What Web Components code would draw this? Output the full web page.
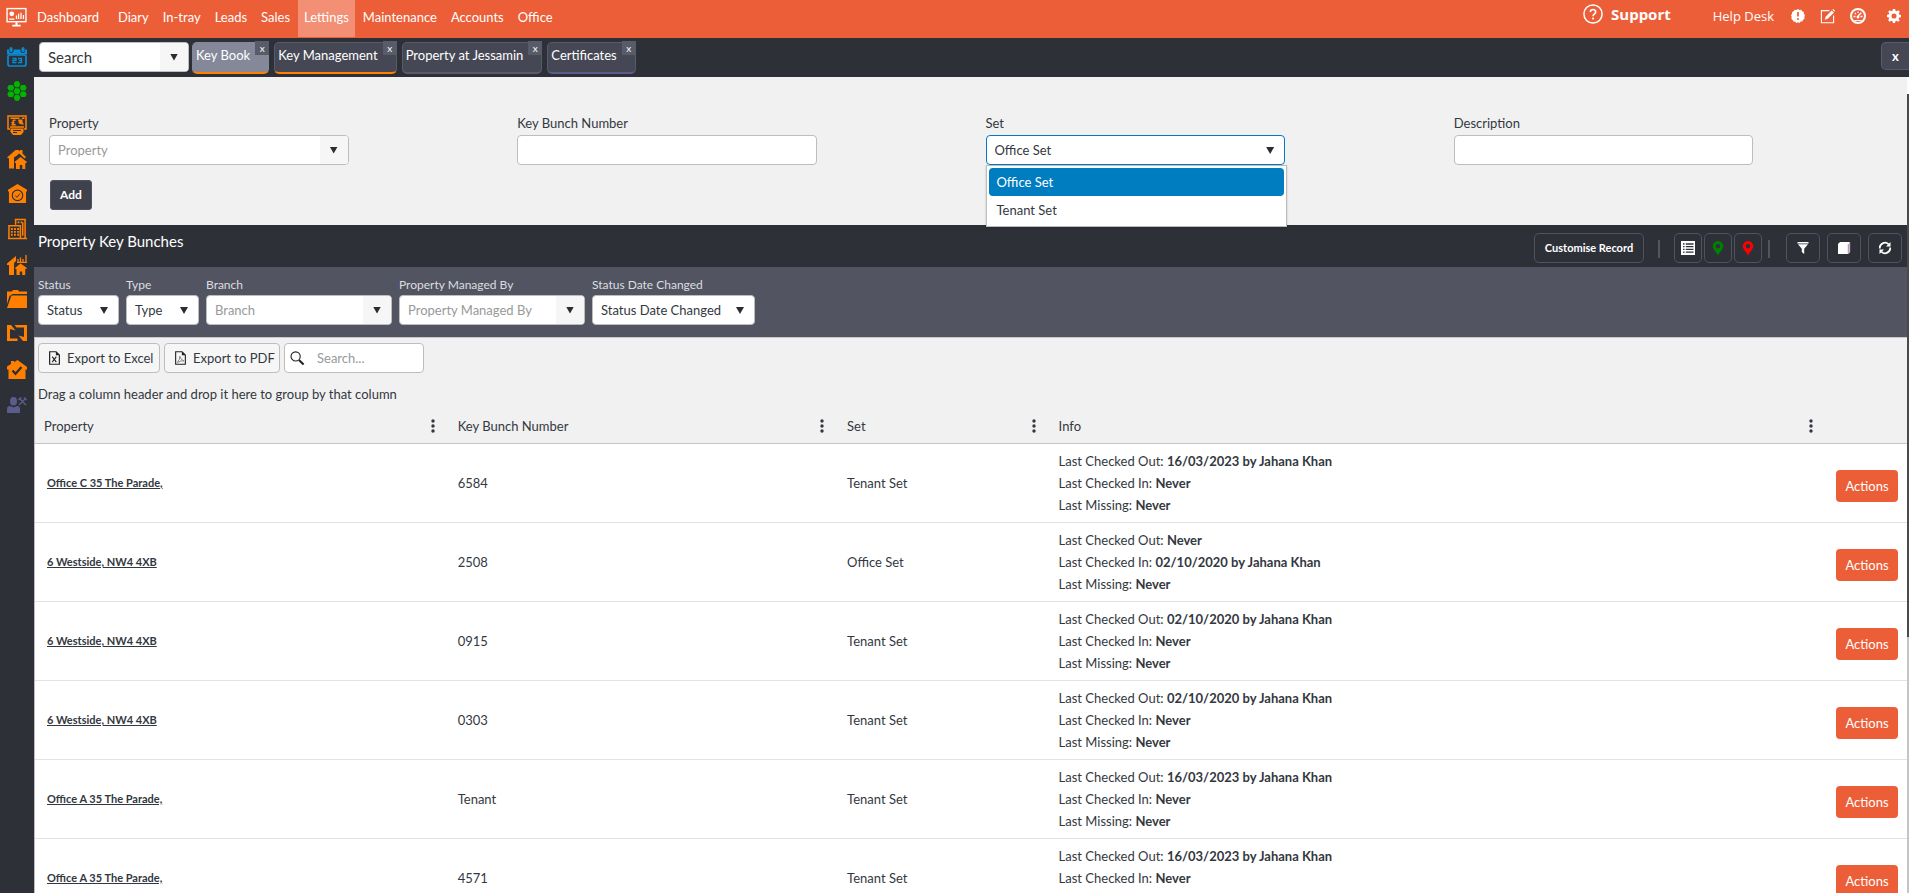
<!DOCTYPE html>
<html lang="en">
<head>
<meta charset="utf-8">
<title>Key Book</title>
<style>
html, body { margin: 0; height: 100%; }
body { font: 13px/16px Lato, "Open Sans", sans-serif; color: #333840; background: #2e3038; }
</style>
</head>
<body>
<key-app></key-app>
<script>
const define = (name, html, setup) => {
  const template = document.createElement('template');
  template.innerHTML = '<style>*{box-sizing:border-box}button,input,select{font:inherit;color:inherit;margin:0}</style>' + html;
  customElements.define(name, class extends HTMLElement {
    connectedCallback() {
      if (this.shadowRoot) return;
      this.attachShadow({ mode: 'open' }).append(template.content.cloneNode(true));
      if (setup) setup(this, this.shadowRoot);
    }
  });
};

const ICONS = {
  monitor: ['0 0 20 20', '<rect x="1" y="1.5" width="18" height="12.5" fill="none" stroke="currentColor" stroke-width="1.3"/><path d="M9 14h2v3h3v1.6H6V17h3z" fill="currentColor"/><circle cx="5.5" cy="6.5" r="2.3" fill="currentColor"/><path d="M3 11.5h5M10 11.5V8m2 3.500V6.500m2.300 5V5.500m2.300 6V7.500" stroke="currentColor" stroke-width="1.200"/>'],
  calendar: ['0 0 20 20', '<g fill="currentColor"><rect x="2.500" y="0" width="3" height="5" rx="1.500"/><rect x="14.500" y="0" width="3" height="5" rx="1.500"/><path d="M0 2.500h2v2l1 1.500h2l1.500-1.500v-2h7v2L15 6h2l1-1.500v-2h2V7.500H0z"/></g><rect x="1" y="8" width="18" height="11" rx="2" fill="none" stroke="currentColor" stroke-width="1.700"/><path d="M5.500 11.500h3.500v2H6v2.200h3.500M11 11.500h3.500v4.200H11M12 13.600h2.500" fill="none" stroke="currentColor" stroke-width="1.300"/>'],
  hexes: ['0 0 20 20', '<path fill="currentColor" d="M8 .5 10 0l2 .5L13.300 3.300 12 6l-2 .6L8 6 6.700 3.300zM8 7.200h4l1.400 2.800-1.400 2.900H8L6.600 10zM8 13.900l2-.5 2 .5 1.300 2.700L12 19.400l-2 .6-2-.6-1.300-2.800zM1.800 4h4L7.200 6.800 5.800 9.600h-4L.3 6.800zM1.800 10.500h4l1.400 2.800-1.400 2.800h-4L.3 13.300zM14.200 4h4l1.500 2.800-1.500 2.800h-4l-1.400-2.800zM14.200 10.500h4l1.500 2.800-1.500 2.800h-4l-1.400-2.800z"/>'],
  invoice: ['0 0 20 20', '<g fill="none" stroke="currentColor" stroke-width="1.500"><path d="M3 14H1V1h18v13h-2M3.500 3.200h9M15 3.200h2.500M3 12h14"/><path d="M8.500 5.200H7q-1 0-1 1.500v3M4.500 7.700h3M4.500 9.700h4.200"/></g><g fill="currentColor"><path d="M11 4.500h4.500V7L17 9.500h-2.300L12 8.500z"/><path d="M3.500 13.500h13V17L14 20H6l-2.500-3z"/></g><path d="M6 15.500h8M6 17.500h4" stroke="#2e3038" stroke-width="1.100"/>'],
  houses: ['0 0 20 20', '<path fill="currentColor" d="M0 8.500 8.500 1h3L13 2.300V1h2.500v3.500L19 8l-1.500 1.500L14 6l-2-1.500L10 6.500 7 8.500V19.500H2V9.500z"/><path fill="currentColor" d="M7.500 13 13.500 8 20 13l-1 1.200-.7-.5V20h-3v-4h-2.500v4H9v-6.300l-.7.500z"/>'],
  homecheck: ['0 0 20 20', '<path fill="currentColor" d="M0 6 10 0l10 6v2h-1v12H1V8H0z"/><circle cx="10" cy="12" r="5.500" fill="none" stroke="#2e3038" stroke-width="1.200"/><path d="m7.500 12 2 2 3.200-4" fill="none" stroke="#2e3038" stroke-width="1"/>'],
  buildings: ['0 0 20 22', '<g fill="none" stroke="currentColor" stroke-width="1.600"><path d="M8 6.500V1h10v20M1 21V7.500h12V21M0 21h20M15.500 4v14"/></g><path stroke="currentColor" stroke-width="2" stroke-dasharray="2 1.300" d="M3 11h9M3 14h9M3 17h9M10 4h5"/>'],
  housechart: ['0 0 20 20', '<path fill="currentColor" d="M0 8.500 9 1v5L7 8v12H2V10H0zM8 13l5.500-4.500L20 13l-1 1.300-.8-.5V20h-3v-3.500h-2.400V20H9.500v-6.200l-.7.500z"/><path d="M11 7V4m2.500 3V2.500M16 7V4m3 3V0M10 7.300h10" stroke="currentColor" stroke-width="1.300"/>'],
  folder: ['0 0 20 18', '<path fill="currentColor" d="M0 1.500h5L6 0h5l1 1.500h8V4H5.500L2.500 6 0 14zM4.500 5.500H20V18H0z"/>'],
  swap: ['0 0 20 16', '<path fill="currentColor" d="M0 0h4l4.500 5.500L3 4v9.500h7.500V16H0zM7.500 0H20v16h-4l-4.500-5.500L17 12V2.500H9.500z"/>'],
  housetick: ['0 0 20 19', '<path fill="currentColor" d="M0 6.500 4 4V1h3v1.200L10.500 0 20 7v2.500h-1.500V19h-17V9.500H0z"/><path d="m5.500 10.500 3 3.200 6-6.700" fill="none" stroke="#2e3038" stroke-width="2.300"/>'],
  worker: ['0 0 20 16', '<g fill="currentColor"><ellipse cx="6.500" cy="4.300" rx="3.500" ry="4.300"/><path d="M0 16v-4q0-3 3-3l3.500 1.500L10 9q3 0 3 3v4z"/></g><path d="m12 1 7 7M19 1l-7 7M11.500 3l3-2.500M17 .5 19.500 3" stroke="currentColor" stroke-width="1.300"/>'],
  help: ['0 0 20 20', '<circle cx="10" cy="10" r="9.100" fill="none" stroke="currentColor" stroke-width="1.500"/><path d="M7.300 8q.2-2.500 2.700-2.500T12.700 8q0 1.300-1.500 2.200-1.200.7-1.200 2" fill="none" stroke="currentColor" stroke-width="1.600"/><circle cx="10" cy="14.500" r="1.100" fill="currentColor"/>'],
  badge: ['0 0 16 16', '<path fill="currentColor" d="m8 0 1.700 1.100 2-.3 1 1.800 1.900.8.100 2L16 7.200 15.200 9l.3 2-1.700 1.200-.7 1.900-2 .1L9.700 16 8 15.200l-1.800.8-1.500-1.500-2-.1-.7-1.900L.4 11l.4-2L0 7.200l1.200-1.700.1-2 1.900-.8 1-1.900 2 .3z"/><path d="M8 3.500v5.200" stroke="#ec5e37" stroke-width="2"/><circle cx="8" cy="11.500" r="1.200" fill="#ec5e37"/>'],
  edit: ['0 0 16 16', '<path d="M10 1.700H1.500v13h13V7" fill="none" stroke="currentColor" stroke-width="1.200"/><path fill="currentColor" d="M5 11.500 6 8.200 12.500 1.600l2.300 2.300-6.600 6.500zM13.300.9 14.200 0 16 1.800l-.9 1z"/>'],
  gauge: ['0 0 16 16', '<circle cx="8" cy="8" r="7" fill="none" stroke="currentColor" stroke-width="2"/><path d="M3.500 8.500h2M10.500 8.500h2M4.800 5l1.200 1M8 3.500V5M8 8l3.300-3.300" stroke="currentColor" stroke-width="1.300"/><circle cx="8" cy="9" r="1.500" fill="currentColor"/><path d="M4.500 12.500h7" stroke="currentColor"/>'],
  gear: ['0 0 16 16', '<path fill="currentColor" fill-rule="evenodd" d="M6.700 0h2.600l.5 2.200 1.200.5 2-1.200L14.600 3.200l-1.200 2 .4 1.200 2.200.4v2.500l-2.200.5-.5 1.200 1.200 2-1.700 1.700-2-1.200-1.200.5-.4 2H6.700L6.200 13.800 5 13.300l-2 1.200L1.300 12.800l1.200-2L2 9.700 0 9.200V6.700l2.100-.5.500-1.200-1.200-2L3.200 1.400l1.900 1.200 1.200-.5zM8 5.100a2.900 2.900 0 1 0 0 5.800 2.900 2.900 0 0 0 0-5.800z"/>'],
  list: ['0 0 14 14', '<path fill="#fff" d="M0 0h14v14H0z"/><path d="M2 3h1.500M2 5.700h1.500M2 8.400h1.500M2 11.100h1.500M4.800 3H12.500M4.800 5.700h7.700M4.800 8.400h7.700M4.800 11.100h7.700" stroke="#2e3038" stroke-width="1.300"/>'],
  pin: ['0 0 12 16', '<path fill="currentColor" fill-rule="evenodd" d="M6 1a5.200 5.200 0 0 1 5.200 5.200C11.200 9.500 7.500 12 6 15.500 4.500 12 .8 9.500.8 6.200A5.200 5.200 0 0 1 6 1zm0 3a2.200 2.200 0 1 0 0 4.400A2.200 2.200 0 0 0 6 4z"/>'],
  funnel: ['0 0 12 12', '<path fill="currentColor" d="M.5 0h11v1.500H.5zM1 2.200h10L7.200 6.800V12l-2.400-2V6.800z"/>'],
  book: ['0 0 14 14', '<path fill="currentColor" d="M1 3 3 1h10v10l-1.500 2H1z"/><path d="M11.300 3v10M12.900 1v10" stroke="#8a6a8c" stroke-width=".8"/>'],
  refresh: ['0 0 14 14', '<g fill="none" stroke="currentColor" stroke-width="1.700"><path d="M1.800 7.500A5.200 5.200 0 0 1 10.500 3.200M12.200 6.500A5.200 5.200 0 0 1 3.500 10.800"/></g><path fill="currentColor" d="M12.500 1v4.500H8zM1.500 13V8.500H6z"/>'],
  excel: ['0 0 12 15', '<path d="M.7.700h7l3.600 3.600v10H.7z" fill="none" stroke="#222" stroke-width="1.300"/><path d="M7.500.7v3.800h3.800z" fill="#222"/><path d="m3.500 6 4.500 6M8 6l-4.500 6" fill="none" stroke="#222" stroke-width="1.200"/>'],
  pdf: ['0 0 12 15', '<path d="M.7.700h7l3.600 3.600v10H.7z" fill="none" stroke="#222" stroke-width="1.200"/><path d="M7.500.7v3.800h3.800z" fill="#222"/><path d="M2.500 12.500Q5.500 9 5.300 5.500 6 9.500 9.800 10.700 6 10 2.500 12.500z" fill="none" stroke="#777" stroke-width=".9"/>'],
  magnifier: ['0 0 16 16', '<circle cx="6" cy="5.800" r="4.900" fill="none" stroke="#222" stroke-width="1.200"/><path d="m9.500 9.500 5 5" stroke="#222" stroke-width="2.200"/>'],
  dots: ['0 0 4 14', '<g fill="#333840"><circle cx="2" cy="2" r="1.700"/><circle cx="2" cy="7" r="1.700"/><circle cx="2" cy="12" r="1.700"/></g>']
};

define('ui-icon', `<style>:host{display:inline-flex;flex:none}svg{display:block;width:100%;height:100%}</style>`, (host, root) => {
  const [box, body] = ICONS[host.getAttribute('name')];
  const size = host.getAttribute('size').split('x');
  host.style.width = size[0] + 'px';
  host.style.height = (size[1] || size[0]) + 'px';
  root.innerHTML += `<svg viewBox="${box}" aria-hidden="true">${body}</svg>`;
});

/* Labelled field: kind = text | combo | select; "dark" for use on the filter bar */
define('ui-field', `<style>
:host{display:block;position:relative;min-width:0}
label{display:block;line-height:16px;margin-bottom:4px}
:host([dark]) label{color:#dcdde0;font-size:12px;line-height:14px;margin-bottom:3px}
.box{display:flex;height:30px;background:#fff;border:1px solid #bdbdbd;border-radius:4px;position:relative;overflow:hidden}
:host([open]) .box{border-color:#007cc0}
input,select{flex:1;min-width:0;width:100%;border:0;outline:0;padding:0 8px;background:none;appearance:none;color:#333840}
input::placeholder{color:var(--placeholder,#999);opacity:1}
button{width:28px;border:0;padding:0;background:#f6f6f6;flex:none}
.arrow{display:block;width:8px;height:7px;background:#292c33;clip-path:polygon(0 0,100% 0,50% 100%);margin:auto}
select+.arrow{position:absolute;right:10px;top:11px;pointer-events:none}
ul{position:absolute;z-index:5;top:100%;left:0;right:-2px;margin:0;padding:2px;list-style:none;background:#fff;border:1px solid #bdbdbd;box-shadow:0 1px 2px #0003}
li{padding:6px 8px;line-height:16px;border-radius:4px}
li[aria-selected=true]{background:#007cc0;color:#fff}
</style><label for="f"></label><div class="box"></div>`, (host, root) => {
  const name = host.getAttribute('label'), kind = host.getAttribute('kind'), box = root.querySelector('.box');
  const bare = host.hasAttribute('bare'), aria = bare ? `aria-label="${name}"` : '';
  root.querySelector('label').textContent = name;
  if (bare) root.querySelector('label').remove();
  if (kind === 'text') box.innerHTML = '<input id="f" type="text">';
  if (kind === 'combo') box.innerHTML = `<input id="f" type="text" ${aria} placeholder="${name}"><button type="button" aria-label="Open ${name}"><span class="arrow"></span></button>`;
  if (kind === 'select') {
    const options = (host.getAttribute('options') || name).split('|');
    box.innerHTML = `<select id="f">${options.map(o => `<option>${o}</option>`).join('')}</select><span class="arrow"></span>`;
    if (host.hasAttribute('open')) box.insertAdjacentHTML('afterend',
      `<ul role="listbox">${options.map((o, i) => `<li role="option" aria-selected="${!i}">${o}</li>`).join('')}</ul>`);
  }
});

define('app-header', `<style>
:host{display:flex;align-items:flex-start;height:38px;background:#ec5e37;color:#fff;padding-right:8px}
nav{display:flex;line-height:34px;height:37px}
a{color:inherit;text-decoration:none;padding:0 7px}
.home{display:flex;align-items:center;gap:10px;padding:0 12px 0 6px;height:34px}
.on{background:#f28f74;padding:0 6px;margin:0 1px}
.right{margin-left:auto;display:flex;align-items:center;height:32px;font-family:"Open Sans",sans-serif}
.support{display:flex;align-items:center;gap:8px;font-size:15px;font-weight:700;padding:0;margin-right:42px;height:28px;align-self:flex-start}
.desk{padding:0;margin-right:17px}
button{border:0;background:none;padding:0;display:flex;margin-right:15px}
button:nth-last-child(2){margin-right:21px}
button:last-child{margin-right:0}
</style>
<nav><a class="home" href="#"><ui-icon name="monitor" size="21"></ui-icon>Dashboard</a><a href="#">Diary</a><a href="#">In-tray</a><a href="#">Leads</a><a href="#">Sales</a><a href="#" class="on">Lettings</a><a href="#">Maintenance</a><a href="#">Accounts</a><a href="#">Office</a></nav>
<div class="right"><a href="#" class="support"><ui-icon name="help" size="20"></ui-icon>Support</a><a href="#" class="desk">Help Desk</a>
<button aria-label="Alerts"><ui-icon name="badge" size="14"></ui-icon></button>
<button aria-label="Edit"><ui-icon name="edit" size="15"></ui-icon></button>
<button aria-label="Performance"><ui-icon name="gauge" size="16"></ui-icon></button>
<button aria-label="Settings"><ui-icon name="gear" size="14"></ui-icon></button></div>`);

define('side-bar', `<style>
:host{display:flex;flex-direction:column;width:34px;background:#2e3038;padding-top:2px;color:#ff8000}
a{color:inherit;display:flex;height:34px;align-items:center;justify-content:center}
.tall{height:38px}
</style>`, (host, root) => {
  const items = [['Diary', 'calendar', '20', '#0a8ad0'], ['Network', 'hexes', '20', '#00b400'], ['Invoices', 'invoice', '20'], ['Properties', 'houses', '20'], ['Inspections', 'homecheck', '19'], ['Buildings', 'buildings', '19x22'], ['Market', 'housechart', '20'], ['Files', 'folder', '20x18'], ['Transfers', 'swap', '20x16'], ['Compliance', 'housetick', '20x19'], ['Contractors', 'worker', '20x16', '#5c5c8c']];
  root.innerHTML += items.map(([t, n, s, c]) => `<a href="#" aria-label="${t}"${n === 'buildings' || n === 'housetick' ? ' class="tall"' : ''}${c ? ` style="color:${c}"` : ''}><ui-icon name="${n}" size="${s}"></ui-icon></a>`).join('');
});

define('open-tab', `<style>
:host{display:flex;height:32px;background:#454854;border:1px solid #585b68;border-bottom:2px solid var(--line,#585b68);border-radius:5px;color:#fff;position:relative}
:host([active]){background:#858899;border-color:#858899;border-bottom-color:var(--line)}
a{color:inherit;text-decoration:none;padding:0 18px 0 3px;line-height:25px;white-space:nowrap}
button{position:absolute;right:-1px;top:-2px;width:14px;height:14px;border:0;padding:0;background:#585b68;font-size:10px;line-height:12px;color:#fff}
</style><a href="#"><slot></slot></a><button aria-label="Close tab">x</button>`);

define('tab-strip', `<style>
:host{display:flex;gap:5px;height:39px;padding:4px 0 0 5px;background:#2e3038}
ui-field{width:150px;font-size:15px;margin-right:-2px;--placeholder:#333840}
.close{margin-left:auto;width:28px;height:28px;border:1px solid #585b68;border-right:0;border-radius:5px 0 0 5px;background:#454854;color:#fff;font-weight:700;padding:0}
.o{--line:#ff8000}.p{--line:#5c5c8c}
</style><ui-field kind="combo" label="Search" bare></ui-field>
<open-tab active class="o">Key Book</open-tab><open-tab class="o">Key Management</open-tab><open-tab>Property at Jessamin</open-tab><open-tab class="p">Certificates</open-tab>
<button class="close" aria-label="Close all tabs">x</button>`);

define('key-form', `<style>
:host{display:block;background:#f1f1f1;padding:38px 0 15px}
.grid{display:grid;grid-template-columns:repeat(4,1fr)}
ui-field{width:64%;margin-left:15px}
button{display:block;margin:15px 0 0 16px;width:42px;height:30px;border:1px solid #50535f;border-radius:3px;background:#3f424c;color:#fff;font-size:12px;font-weight:700;padding:0}
</style><div class="grid"><ui-field kind="combo" label="Property"></ui-field><ui-field kind="text" label="Key Bunch Number"></ui-field><ui-field kind="select" label="Set" open options="Office Set|Tenant Set"></ui-field><ui-field kind="text" label="Description"></ui-field></div><button type="button">Add</button>`);

define('title-bar', `<style>
:host{display:flex;align-items:flex-start;height:42px;background:#2e3038;color:#fff;padding:8px 5px 0 4px}
h2{margin:0 auto 0 0;font-size:15px;font-weight:400;line-height:16px}
button{height:30px;width:34px;display:flex;align-items:center;justify-content:center;border:1px solid #50535f;border-radius:5px;background:none;padding:0;margin-left:7px}
.s{width:28px;margin-left:2px}
.w{width:110px;font-size:11px;font-weight:700}
i{width:2px;height:18px;background:#55555a;margin:7px 0 0 14px}
i+button{margin-left:16px}
i+.s{margin-left:14px}
.s+i{margin-left:6px}
</style><h2>Property Key Bunches</h2><button class="w">Customise Record</button><i></i>
<button class="s" aria-label="List view"><ui-icon name="list" size="14"></ui-icon></button><button class="s" aria-label="Green pins" style="color:#008000"><ui-icon name="pin" size="12x16"></ui-icon></button><button class="s" aria-label="Red pins" style="color:#f00"><ui-icon name="pin" size="12x16"></ui-icon></button><i></i>
<button aria-label="Filter"><ui-icon name="funnel" size="12"></ui-icon></button><button aria-label="Records"><ui-icon name="book" size="14"></ui-icon></button><button aria-label="Refresh"><ui-icon name="refresh" size="14"></ui-icon></button>`);

define('filter-bar', `<style>
:host{display:flex;gap:7px;height:70px;padding:11px 4px 0;background:#525561}
</style><ui-field dark kind="select" label="Status" style="width:81px"></ui-field><ui-field dark kind="select" label="Type" style="width:73px"></ui-field><ui-field dark kind="combo" label="Branch" style="width:186px"></ui-field><ui-field dark kind="combo" label="Property Managed By" style="width:186px"></ui-field><ui-field dark kind="select" label="Status Date Changed" style="width:163px"></ui-field>`);

define('key-grid', `<style>
:host{display:block;background:#f1f1f1;border-left:1px solid #bdbdbd;border-top:1px solid #c8c8c8}
.tools{display:flex;gap:4px;padding:5px 3px}
.tools button,.find{height:30px;border:1px solid #bdbdbd;border-radius:4px;display:flex;align-items:center}
.tools button{background:#f6f6f6;gap:7px;padding:0 0 0 10px}
.find{background:#fff;width:140px;padding-left:5px;gap:12px}
.find input{border:0;outline:0;padding:0;min-width:0;flex:1;background:none}
.find input::placeholder{color:#999;opacity:1}
p{margin:0;padding:8px 3px;line-height:16px;height:38px}
table{width:100%;table-layout:fixed;border-collapse:collapse}
th{font-weight:400;text-align:left;height:27px;padding:0 9px 6px;border-bottom:1px solid #c4c4c4}
th div{display:flex;justify-content:space-between;align-items:center;height:20px}
th button{border:0;background:none;padding:0 5px;display:flex}
td{background:#fff;height:79px;padding:6px 9px;border-bottom:1px solid #e2e2e2;line-height:22px}
td:first-child{padding-left:12px}
td a{color:#333840;font-size:11px;font-weight:700}
td .act{display:block;width:62px;height:32px;border:0;border-radius:4px;background:#ec5e37;color:#fff;padding:0;margin-top:6px}
</style>
<div class="tools"><button style="width:122px"><ui-icon name="excel" size="11x14"></ui-icon>Export to Excel</button><button style="width:116px"><ui-icon name="pdf" size="11x14"></ui-icon>Export to PDF</button><div class="find"><ui-icon name="magnifier" size="15"></ui-icon><input type="text" aria-label="Search" placeholder="Search..."></div></div>
<p>Drag a column header and drop it here to group by that column</p>
<table><colgroup><col style="width:22.1%"><col style="width:20.8%"><col style="width:11.3%"><col><col style="width:80px"></colgroup><thead><tr></tr></thead><tbody></tbody></table>`, (host, root) => {
  root.querySelector('thead tr').innerHTML = ['Property', 'Key Bunch Number', 'Set', 'Info'].map(t => `<th scope="col"><div>${t}<button aria-label="${t} column menu"><ui-icon name="dots" size="4x14"></ui-icon></button></div></th>`).join('') + '<th></th>';
  const N = 'Never', M = '16/03/2023 by Jahana Khan', O = '02/10/2020 by Jahana Khan';
  const rows = [
    ['Office C 35 The Parade,', '6584', 'Tenant Set', M, N],
    ['6 Westside, NW4 4XB', '2508', 'Office Set', N, O],
    ['6 Westside, NW4 4XB', '0915', 'Tenant Set', O, N],
    ['6 Westside, NW4 4XB', '0303', 'Tenant Set', O, N],
    ['Office A 35 The Parade,', 'Tenant', 'Tenant Set', M, N],
    ['Office A 35 The Parade,', '4571', 'Tenant Set', M, N]
  ];
  root.querySelector('tbody').innerHTML = rows.map(([p, k, s, out, back]) => `<tr><td><a href="#">${p}</a></td><td>${k}</td><td>${s}</td><td>Last Checked Out: <b>${out}</b><br>Last Checked In: <b>${back}</b><br>Last Missing: <b>Never</b></td><td><button class="act">Actions</button></td></tr>`).join('');
});

define('key-app', `<style>
:host{display:flex;flex-direction:column;height:100vh;overflow:hidden}
.body{flex:1;display:flex;min-height:0}
.work{flex:1;min-width:0;display:flex;flex-direction:column}
.view{flex:1;min-height:0;display:flex}
main{flex:1;min-width:0;overflow-y:auto;scrollbar-width:none}
.track{width:2px;background:linear-gradient(#fcfcfc 0 17px,#4a4a4a 17px 560px,#c4c4c4 560px)}
</style><app-header></app-header><div class="body"><side-bar></side-bar><div class="work"><tab-strip></tab-strip><div class="view"><main><key-form></key-form><title-bar></title-bar><filter-bar></filter-bar><key-grid></key-grid></main><div class="track"></div></div></div></div>`);
</script>
</body>
</html>
